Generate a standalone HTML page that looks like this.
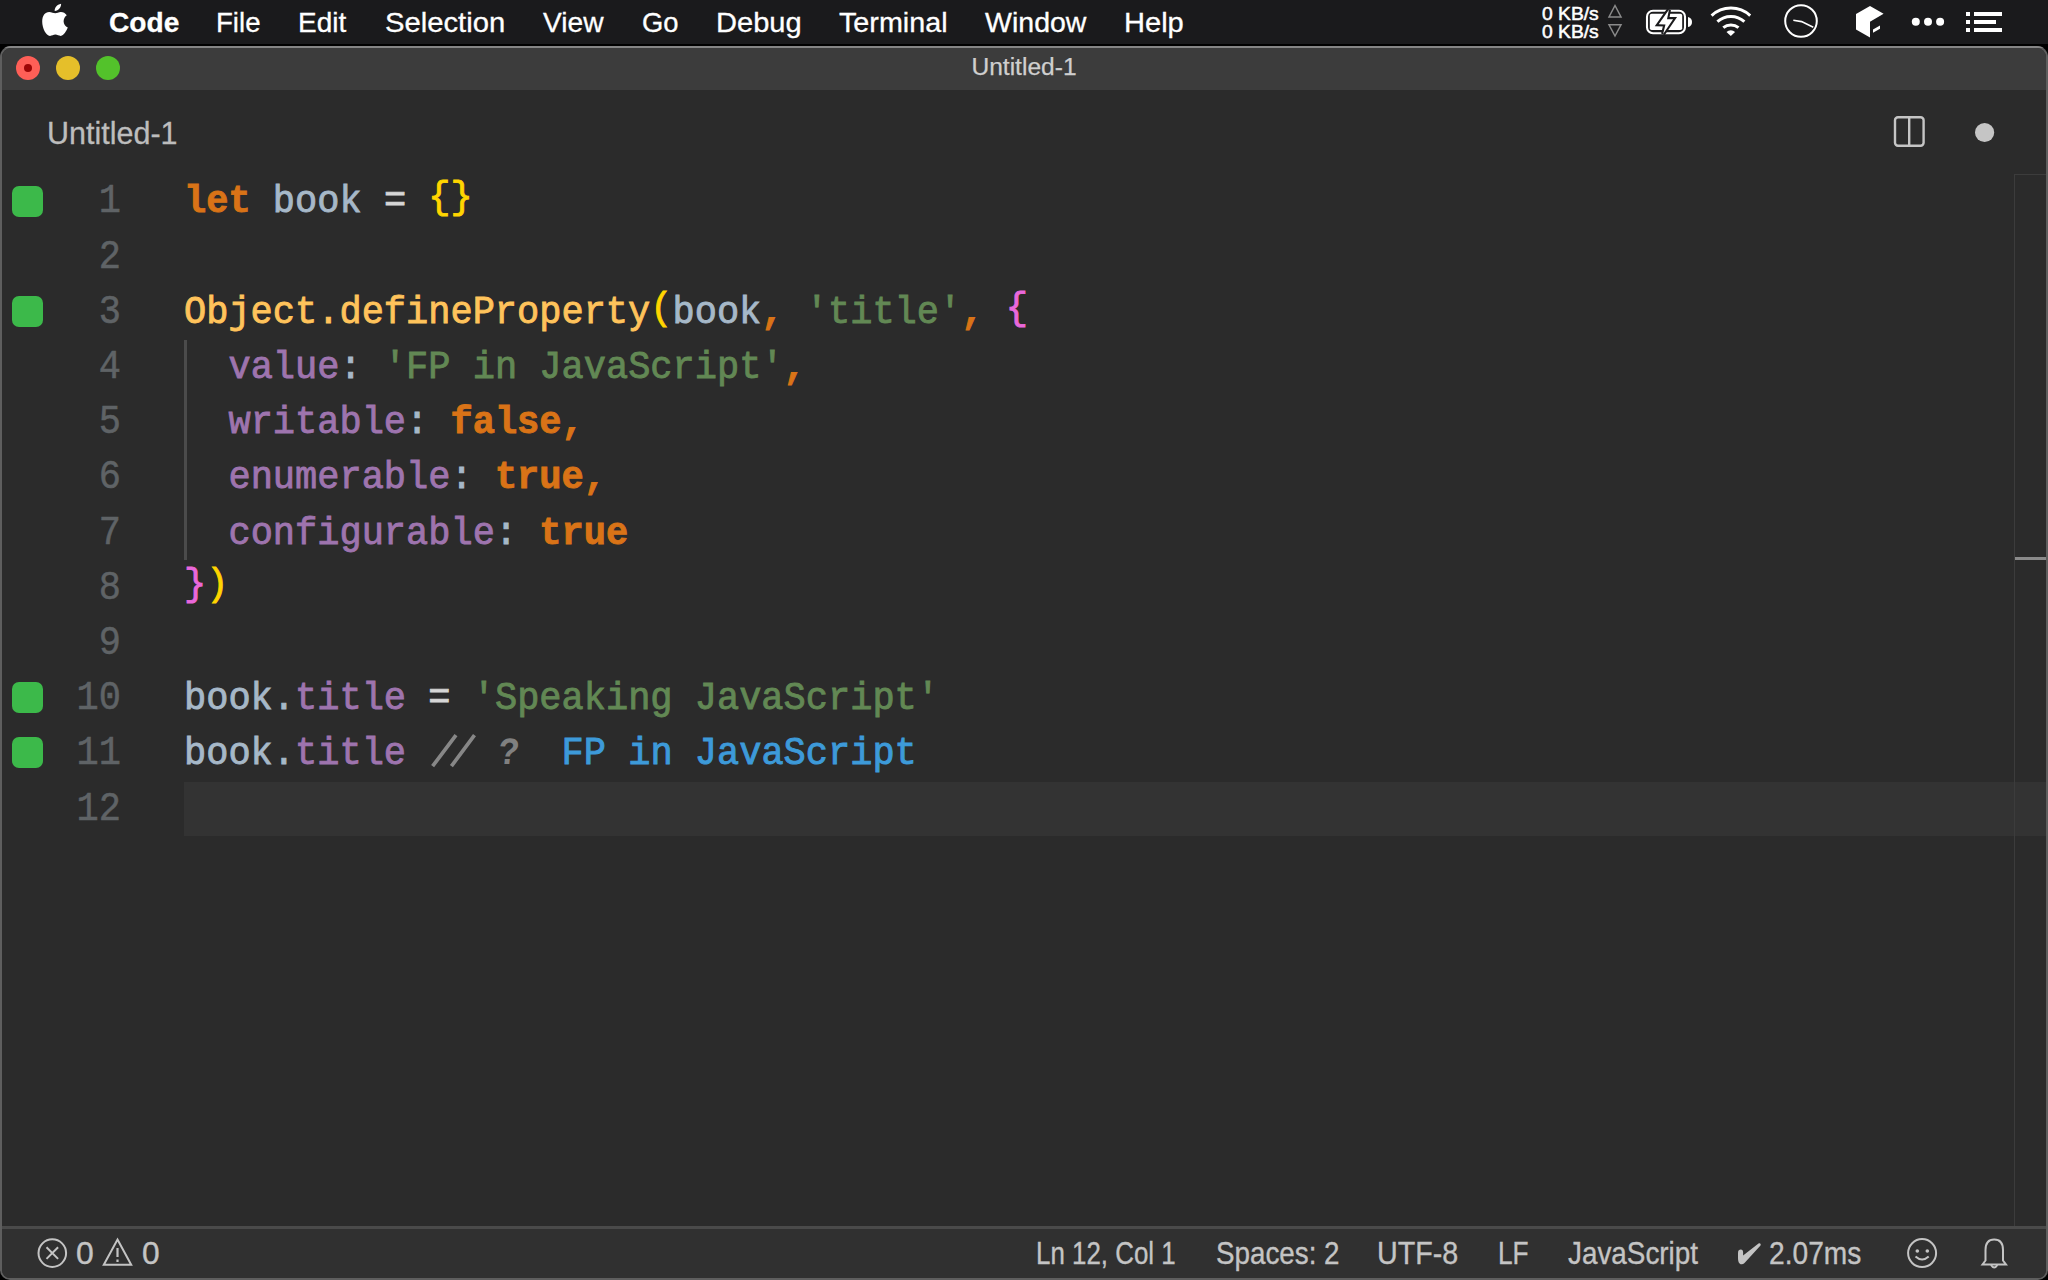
<!DOCTYPE html>
<html><head><meta charset="utf-8">
<style>
*{margin:0;padding:0;box-sizing:border-box}
html,body{width:2048px;height:1280px;overflow:hidden;background:#000}
body{position:relative;font-family:"Liberation Sans",sans-serif}
svg{position:absolute;left:0;top:0}
#menubar{position:absolute;left:0;top:0;width:2048px;height:44px;background:#1a1a1c}
.mi{position:absolute;top:0.8px;height:44px;line-height:44px;font-size:28px;color:#fff;white-space:pre;transform-origin:0 50%;-webkit-text-stroke:0.3px #fff}
#win{position:absolute;left:0;top:46px;width:2048px;height:1234px;background:#5e5e5e;border-radius:11px 11px 10px 10px;overflow:hidden}
#wininner{position:absolute;left:2px;top:2px;right:2px;bottom:2px;background:#2b2b2b;border-radius:9px 9px 8px 8px;overflow:hidden}
#wintop{position:absolute;left:0;top:0;width:2048px;height:2px;background:#858585}
#titlebar{position:absolute;left:0;top:0;width:2048px;height:42px;background:#3c3c3c}
.tl{position:absolute;width:24px;height:24px;border-radius:50%}
.title{position:absolute;top:45.4px;left:0;width:2048px;height:44px;line-height:44px;text-align:center;font-size:23.5px;color:#cfcfcf;transform:scaleX(1.045);-webkit-text-stroke:0.25px #cfcfcf}
.tab{position:absolute;left:47px;top:109.6px;height:46px;line-height:46px;font-size:31.8px;color:#bdbdbd;white-space:pre;transform:scaleX(0.959);transform-origin:0 50%;-webkit-text-stroke:0.3px #bdbdbd}
.code{position:absolute;left:184px;font-family:"Liberation Mono",monospace;font-size:37px;white-space:pre;height:55.2px;line-height:55.2px;transform:translateY(1px) scaleY(1.06);transform-origin:0 36.7px;-webkit-text-stroke:0.85px}
.ln{position:absolute;left:60px;width:61px;text-align:right;font-family:"Liberation Mono",monospace;font-size:37px;color:#5f6366;white-space:pre;height:55.2px;line-height:55.2px;transform:translateY(1px) scaleY(1.09);transform-origin:0 36.7px;-webkit-text-stroke:0.5px}
.sq{position:absolute;left:12px;width:31px;height:31px;border-radius:7px;background:#3cb94a}
.kw{color:#d97317;font-weight:bold}
.id{color:#a6b8c8}
.fn{color:#ffc35b}
.str{color:#628854}
.prop{color:#9e74ae}
.op{color:#a6b8c8}
.eq{color:#d6d6d6}
.b1{color:#ffd500;position:relative;top:-3.8px}
.b2{color:#ea68db;position:relative;top:-3.8px}
.cm{color:#808080;font-style:italic}
.qk{color:#3d9ad9;-webkit-text-stroke:0.9px #3d9ad9}
#curline{position:absolute;left:183.6px;top:781.9px;width:1862.4px;height:54px;background:#333333}
#status{position:absolute;left:2px;top:1226px;width:2044px;height:52px;background:#303030;border-top:3px solid #4a4a4a;border-radius:0 0 8px 8px}
.sb{position:absolute;top:1229px;height:49px;line-height:49px;font-size:30.5px;transform-origin:0 50%;color:#c4c4c4;white-space:pre;-webkit-text-stroke:0.35px #c4c4c4}
</style></head>
<body>
<div id="menubar"></div>
<div class="mi" style="left:108.7px;transform:scaleX(1.004);font-weight:bold">Code</div>
<div class="mi" style="left:216.1px;transform:scaleX(0.986)">File</div>
<div class="mi" style="left:298px;transform:scaleX(0.998)">Edit</div>
<div class="mi" style="left:384.6px;transform:scaleX(1.044)">Selection</div>
<div class="mi" style="left:543.1px;transform:scaleX(1.005)">View</div>
<div class="mi" style="left:642.4px;transform:scaleX(0.978)">Go</div>
<div class="mi" style="left:715.8px;transform:scaleX(1.038)">Debug</div>
<div class="mi" style="left:839px;transform:scaleX(1.026)">Terminal</div>
<div class="mi" style="left:984.9px;transform:scaleX(1.019)">Window</div>
<div class="mi" style="left:1123.7px;transform:scaleX(1.038)">Help</div>
<div class="mi" style="left:1542px;top:4px;height:20px;line-height:20px;font-size:18px;transform:scaleX(1.07);-webkit-text-stroke:0.5px #fff">0 KB/s</div>
<div class="mi" style="left:1542px;top:22px;height:20px;line-height:20px;font-size:18px;transform:scaleX(1.07);-webkit-text-stroke:0.5px #fff">0 KB/s</div>

<svg width="2048" height="44" viewBox="0 0 2048 44">
  <!-- apple -->
  <path fill="#fff" d="M55.3,13.2 C53.5,13.2 51.5,11.9 49.2,11.9 C45,11.9 42.2,15.5 42.2,21.5 C42.2,28 46,35.9 50,35.9 C52,35.9 53.3,34.6 55.4,34.6 C57.5,34.6 58.6,35.9 60.8,35.9 C63.5,35.9 66.5,31 67.8,27.6 C65.3,26.4 63.6,24 63.6,21.2 C63.6,18.6 65,16.4 66.8,15.2 C65.4,13.1 63.2,11.9 60.9,11.9 C58.5,11.9 57,13.2 55.3,13.2 Z M54.7,11 C54.5,8 56.8,4.5 61.1,3.8 C61.3,7.2 58.6,10.6 54.7,11 Z"/>
  <!-- arrows -->
  <path fill="none" stroke="#8a8a8a" stroke-width="1.5" d="M1615,5.5 L1621,17 L1609,17 Z M1615,36 L1621,24.8 L1609,24.8 Z"/>
  <!-- battery -->
  <rect x="1647" y="10.7" width="38" height="22.5" rx="6" fill="none" stroke="#fff" stroke-width="2.1"/>
  <rect x="1649.8" y="13.8" width="32.4" height="16.3" rx="1.8" fill="#fff"/>
  <path d="M1688,16.9 L1688,27.1 Q1692,26.2 1692,22 Q1692,17.8 1688,16.9 Z" fill="#fff"/>
  <path d="M1668.9,9.8 L1658.7,24.2 L1665.5,24.5 L1663.1,33.9 L1673.1,19.2 L1667,19.2 Z" fill="#1a1a1c" stroke="#1a1a1c" stroke-width="4.2" stroke-linejoin="miter"/>
  <path d="M1668.9,9.8 L1658.7,24.2 L1665.5,24.5 L1663.1,33.9 L1673.1,19.2 L1667,19.2 Z" fill="#fff"/>
  <!-- wifi -->
  <g fill="none" stroke="#fff" stroke-width="3" stroke-linecap="butt">
    <path d="M1711.6,15.6 A28.5,28.5 0 0 1 1750.2,15.6"/>
    <path d="M1717.4,21.7 A20,20 0 0 1 1744.4,21.7"/>
    <path d="M1723.3,27.7 A11.8,11.8 0 0 1 1738.5,27.7"/>
  </g>
  <path d="M1730.8,36 L1726.5,32 A6,6 0 0 1 1735.1,32 Z" fill="#fff"/>
  <!-- clock -->
  <circle cx="1801" cy="21" r="15.8" fill="none" stroke="#fff" stroke-width="2"/>
  <path d="M1793.3,20.3 L1801.6,21.6 L1813.3,27.2" fill="none" stroke="#fff" stroke-width="1.6"/>
  <!-- cube -->
  <path fill="#fff" d="M1870,6 L1883.6,13.8 L1870,21.8 L1870,37.6 L1856,29.5 L1856,14 Z"/>
  <path fill="#fff" d="M1873,29.4 L1880,25.4 L1880,28.8 L1873,32.8 Z"/>
  <!-- dots -->
  <circle cx="1915.8" cy="21.8" r="4" fill="#fff"/>
  <circle cx="1928" cy="21.8" r="4" fill="#fff"/>
  <circle cx="1940.1" cy="21.8" r="4" fill="#fff"/>
  <!-- list -->
  <g fill="#fff">
    <rect x="1966" y="12" width="4" height="4"/><rect x="1974" y="12" width="28" height="4"/>
    <rect x="1966" y="20" width="4" height="4"/><rect x="1974" y="20" width="22" height="4"/>
    <rect x="1966" y="28" width="4" height="4"/><rect x="1974" y="28" width="28" height="4"/>
  </g>
</svg>

<div id="win">
  <div id="wintop"></div>
  <div id="wininner">
    <div id="titlebar"></div>
  </div>
</div>
<div class="tl" style="left:16px;top:56px;background:#fe5f57"></div>
<div style="position:absolute;left:24px;top:64px;width:8px;height:8px;border-radius:50%;background:#9c0606"></div>
<div class="tl" style="left:56px;top:56px;background:#e5bf2a"></div>
<div class="tl" style="left:96px;top:56px;background:#53c22b"></div>
<div class="title">Untitled-1</div>
<div class="tab">Untitled-1</div>

<svg width="2048" height="1280" viewBox="0 0 2048 1280" style="pointer-events:none">
  <rect x="1895" y="117.2" width="28.6" height="28.6" rx="3" fill="none" stroke="#c5c5c5" stroke-width="2.4"/>
  <rect x="1908" y="117" width="2.4" height="29" fill="#c5c5c5"/>
  <circle cx="1984.6" cy="132.5" r="9.6" fill="#c5c5c5"/>
</svg>

<div id="curline"></div>
<div style="position:absolute;left:184px;top:340px;width:2.6px;height:220px;background:#4b4b4b"></div>
<div style="position:absolute;left:2014px;top:174px;width:1px;height:1052px;background:#3c3c3c"></div>
<div style="position:absolute;left:2014px;top:174px;width:32px;height:1px;background:#3c3c3c"></div>
<div style="position:absolute;left:2015px;top:557px;width:31px;height:3px;background:#8a8a8a"></div>

<!-- gutter squares -->
<div class="sq" style="top:186px"></div>
<div class="sq" style="top:296.4px"></div>
<div class="sq" style="top:682px"></div>
<div class="sq" style="top:737.2px"></div>

<!-- code -->
<div class="ln" style="top:174.3px">1</div>
<div class="ln" style="top:229.5px">2</div>
<div class="ln" style="top:284.7px">3</div>
<div class="ln" style="top:339.9px">4</div>
<div class="ln" style="top:395.1px">5</div>
<div class="ln" style="top:450.3px">6</div>
<div class="ln" style="top:505.5px">7</div>
<div class="ln" style="top:560.7px">8</div>
<div class="ln" style="top:615.9px">9</div>
<div class="ln" style="top:671.1px">10</div>
<div class="ln" style="top:726.3px">11</div>
<div class="ln" style="top:781.5px">12</div>

<div class="code" style="top:174.3px"><span class="kw">let</span> <span class="id">book</span> <span class="eq">=</span> <span class="b1">{}</span></div>
<div class="code" style="top:284.7px"><span class="fn">Object.defineProperty</span><span class="b1">(</span><span class="id">book</span><span class="kw">,</span> <span class="str">'title'</span><span class="kw">,</span> <span class="b2">{</span></div>
<div class="code" style="top:339.9px">  <span class="prop">value</span><span class="op">:</span> <span class="str">'FP in JavaScript'</span><span class="kw">,</span></div>
<div class="code" style="top:395.1px">  <span class="prop">writable</span><span class="op">:</span> <span class="kw">false,</span></div>
<div class="code" style="top:450.3px">  <span class="prop">enumerable</span><span class="op">:</span> <span class="kw">true,</span></div>
<div class="code" style="top:505.5px">  <span class="prop">configurable</span><span class="op">:</span> <span class="kw">true</span></div>
<div class="code" style="top:560.7px"><span class="b2">}</span><span class="b1">)</span></div>
<div class="code" style="top:671.1px"><span class="id">book.</span><span class="prop">title</span> <span class="eq">=</span> <span class="str">'Speaking JavaScript'</span></div>
<div class="code" style="top:726.3px"><span class="id">book.</span><span class="prop">title</span> <span class="cm"><span style="opacity:0">//</span> <span style="display:inline-block;font-style:normal;font-weight:bold;-webkit-text-stroke:0;transform:translate(2.6px,0.6px) skewX(-6deg) scale(0.94,0.98)">?</span></span>  <span class="qk">FP in JavaScript</span></div>

<svg width="2048" height="1280" viewBox="0 0 2048 1280"><path d="M432.6,766.2 L456,735.1 M451.4,766.2 L474.5,735.1" stroke="#878787" stroke-width="3.7" stroke-linecap="butt" fill="none"/></svg>
<!-- status bar -->
<div id="status"></div>
<div style="position:absolute;left:2014px;top:1220px;width:1px;height:6px;background:#3c3c3c"></div>
<svg width="2048" height="1280" viewBox="0 0 2048 1280">
  <g fill="none" stroke="#c4c4c4" stroke-width="2">
    <circle cx="52.3" cy="1253.1" r="13.8"/>
    <path d="M46.5,1247.3 L58.1,1258.9 M58.1,1247.3 L46.5,1258.9"/>
    <path d="M117.5,1239.5 L131.2,1264.8 L103.8,1264.8 Z" stroke-linejoin="miter"/>
    <circle cx="1922.1" cy="1253.1" r="14"/>
    <path d="M1915.5,1256.5 Q1922.1,1262.5 1928.7,1256.5"/>
    <path d="M1985.5,1260.5 L1985.5,1250 Q1985.5,1239.5 1994.2,1239.5 Q2003,1239.5 2003,1250 L2003,1260.5 L2006,1264.5 L1982.5,1264.5 Z"/>
    <path d="M1991,1265 Q1994.2,1270 1997.4,1265"/>
  </g>
  <g fill="#c4c4c4">
    <path d="M1738,1253 C1738,1250.5 1739.3,1249.6 1740.8,1249.6 C1742.4,1249.6 1743.1,1250.8 1743.1,1252.5 L1743.1,1255.5 L1758.5,1243.6 C1760,1242.6 1761.3,1244 1760.5,1245.5 L1744.5,1263 C1743,1264.6 1741,1264.8 1739.6,1263.5 C1738.3,1262.3 1738,1260 1738,1258 Z"/>
    <rect x="116.4" y="1248" width="2.2" height="9"/>
    <rect x="116.4" y="1259.5" width="2.2" height="2.5"/>
    <circle cx="1917.3" cy="1251" r="1.8"/>
    <circle cx="1927.3" cy="1251" r="1.8"/>
  </g>
</svg>
<div class="sb" style="left:76px;transform:scaleX(1.047)">0</div>
<div class="sb" style="left:141.6px;transform:scaleX(1.04)">0</div>
<div class="sb" style="left:1036.1px;transform:scaleX(0.849)">Ln 12, Col 1</div>
<div class="sb" style="left:1215.5px;transform:scaleX(0.911)">Spaces: 2</div>
<div class="sb" style="left:1377.2px;transform:scaleX(0.94)">UTF-8</div>
<div class="sb" style="left:1498.1px;transform:scaleX(0.86)">LF</div>
<div class="sb" style="left:1567.9px;transform:scaleX(0.913)">JavaScript</div>
<div class="sb" style="left:1768.8px;transform:scaleX(0.923)">2.07ms</div>
</body></html>
